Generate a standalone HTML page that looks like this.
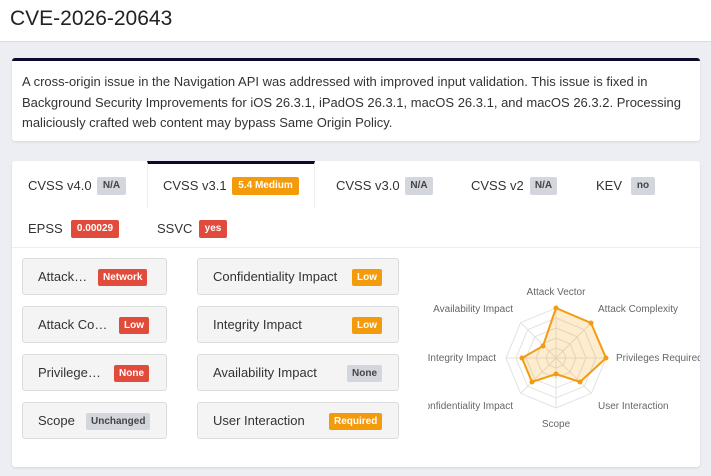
<!DOCTYPE html>
<html><head><style>
*{box-sizing:border-box;margin:0;padding:0}
body{width:711px;height:476px;background:#eceef3;font-family:"Liberation Sans",sans-serif;color:#333;position:relative;overflow:hidden}
.hdr{position:absolute;left:0;top:0;width:711px;height:42px;background:#fff;border-bottom:1px solid #d8dbe0}
.hdr h1{position:absolute;left:10px;top:7px;font-size:21px;font-weight:normal;color:#222}
.desc{position:absolute;left:12px;top:58px;width:688px;height:83px;background:#fff;border-top:3px solid #0b0a2c;border-radius:3px;box-shadow:0 1px 2px rgba(0,0,0,.1);padding:11px 10px;font-size:13px;line-height:20.5px;color:#333}
.card{position:absolute;left:12px;top:161px;width:688px;height:306px;background:#fff;border-radius:3px;box-shadow:0 1px 2px rgba(0,0,0,.1)}
.t{position:absolute;font-size:13px;color:#333}
.b{position:absolute;font-size:10px;font-weight:bold;color:#fff;height:18px;line-height:18px;text-align:center;border-radius:2px}
.na{background:#d3d6dd;color:#444}.or{background:#f49b0b}.rd{background:#e04b3b}
.act{position:absolute;left:147px;top:161px;width:168px;height:47px;border-top:3px solid #0b0a2c;border-right:1px solid #eee;border-left:1px solid #eee}
.div{position:absolute;left:12px;top:247px;width:688px;height:1px;background:#eceef1}
.m{position:absolute;height:37px;background:#f4f4f4;border:1px solid #dcdcdc;border-radius:3px}
.m span{position:absolute;left:15px;top:10px;font-size:13px;color:#333}
.m i{position:absolute;top:10px;font-style:normal;font-size:10px;font-weight:bold;color:#fff;height:17px;line-height:17px;padding:0 5px;border-radius:2px}
svg text{font-family:"Liberation Sans",sans-serif;font-size:10px;fill:#666}
</style></head><body>
<div class="hdr"><h1>CVE-2026-20643</h1></div>
<div class="desc">A cross-origin issue in the Navigation API was addressed with improved input validation. This issue is fixed in Background Security Improvements for iOS 26.3.1, iPadOS 26.3.1, macOS 26.3.1, and macOS 26.3.2. Processing maliciously crafted web content may bypass Same Origin Policy.</div>
<div class="card"></div>
<div class="act"></div>
<div class="t" style="left:28px;top:178px">CVSS v4.0</div><div class="b na" style="left:97px;top:177px;width:29px">N/A</div>
<div class="t" style="left:163px;top:178px">CVSS v3.1</div><div class="b or" style="left:232px;top:177px;width:67px">5.4 Medium</div>
<div class="t" style="left:336px;top:178px">CVSS v3.0</div><div class="b na" style="left:405px;top:177px;width:28px">N/A</div>
<div class="t" style="left:471px;top:178px">CVSS v2</div><div class="b na" style="left:530px;top:177px;width:27px">N/A</div>
<div class="t" style="left:596px;top:178px">KEV</div><div class="b na" style="left:631px;top:177px;width:24px">no</div>
<div class="t" style="left:28px;top:221px">EPSS</div><div class="b rd" style="left:71px;top:220px;width:48px">0.00029</div>
<div class="t" style="left:157px;top:221px">SSVC</div><div class="b rd" style="left:199px;top:220px;width:28px">yes</div>
<div class="div"></div>
<div class="m" style="left:22px;top:258px;width:145px"><span>Attack…</span><i class="rd" style="left:75px">Network</i></div>
<div class="m" style="left:22px;top:306px;width:145px"><span>Attack Co…</span><i class="rd" style="left:96px">Low</i></div>
<div class="m" style="left:22px;top:354px;width:145px"><span>Privilege…</span><i class="rd" style="left:91px">None</i></div>
<div class="m" style="left:22px;top:402px;width:145px"><span>Scope</span><i class="na" style="left:63px;color:#444">Unchanged</i></div>
<div class="m" style="left:197px;top:258px;width:202px"><span>Confidentiality Impact</span><i class="or" style="left:154px">Low</i></div>
<div class="m" style="left:197px;top:306px;width:202px"><span>Integrity Impact</span><i class="or" style="left:154px">Low</i></div>
<div class="m" style="left:197px;top:354px;width:202px"><span>Availability Impact</span><i class="na" style="left:149px;color:#444">None</i></div>
<div class="m" style="left:197px;top:402px;width:202px"><span>User Interaction</span><i class="or" style="left:131px">Required</i></div>
<svg style="position:absolute;left:428px;top:270px" width="272" height="170" viewBox="428 270 272 170">
<g fill="none" stroke="#e2e2e2" stroke-width="1">
<polygon points="556,308 591.4,322.6 606,358 591.4,393.4 556,408 520.6,393.4 506,358 520.6,322.6"/>
<polygon points="556,318 584.3,329.7 596,358 584.3,386.3 556,398 527.7,386.3 516,358 527.7,329.7"/>
<polygon points="556,328 577.2,336.8 586,358 577.2,379.2 556,388 534.8,379.2 526,358 534.8,336.8"/>
<polygon points="556,338 570.1,343.9 576,358 570.1,372.1 556,378 541.9,372.1 536,358 541.9,343.9"/>
<polygon points="556,348 563.1,350.9 566,358 563.1,365.1 556,368 548.9,365.1 546,358 548.9,350.9"/>
<path d="M556 358L556 308M556 358L591.4 322.6M556 358L606 358M556 358L591.4 393.4M556 358L556 408M556 358L520.6 393.4M556 358L506 358M556 358L520.6 322.6"/>
</g>
<polygon points="556,308 591,323 606,358 580,382 556,374 532,382 522,358 543,346" fill="rgba(245,158,11,0.2)" stroke="#f39c12" stroke-width="2"/>
<g fill="#f39c12"><circle cx="556" cy="308" r="2.5"/><circle cx="591" cy="323" r="2.5"/><circle cx="606" cy="358" r="2.5"/><circle cx="580" cy="382" r="2.5"/><circle cx="556" cy="374" r="2.5"/><circle cx="532" cy="382" r="2.5"/><circle cx="522" cy="358" r="2.5"/><circle cx="543" cy="346" r="2.5"/></g>
<text x="556" y="295" text-anchor="middle">Attack Vector</text>
<text x="598" y="312">Attack Complexity</text>
<text x="616" y="361">Privileges Required</text>
<text x="598" y="409">User Interaction</text>
<text x="556" y="427" text-anchor="middle">Scope</text>
<text x="513" y="409" text-anchor="end">Confidentiality Impact</text>
<text x="496" y="361" text-anchor="end">Integrity Impact</text>
<text x="513" y="312" text-anchor="end">Availability Impact</text>
</svg>
</body></html>
